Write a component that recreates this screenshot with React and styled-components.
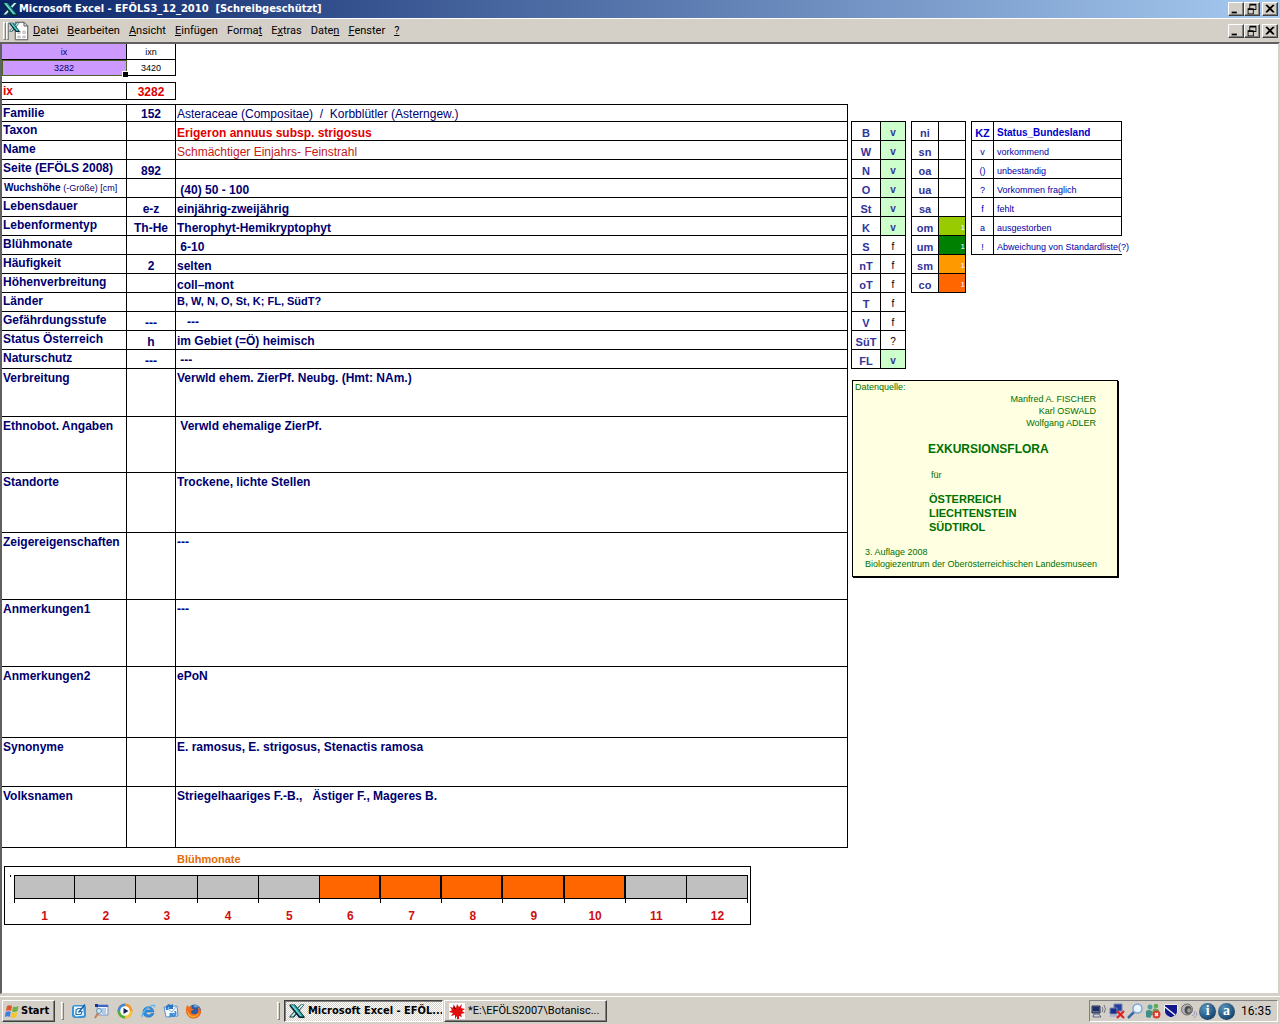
import React from "react";
import styled, { createGlobalStyle, css } from "styled-components";

const GlobalStyle = createGlobalStyle`
  * { box-sizing: border-box; }
  body {
    margin: 0;
    background: #d4d0c8;
    font-family: "Liberation Sans", Arial, sans-serif;
    font-size: 12px;
    line-height: 14px;
  }
`;

const uiFont = `Roboto, "Liberation Sans", sans-serif`;
const boldUiFont = `"DejaVu Sans Condensed", "DejaVu Sans", sans-serif`;
const navy = "#000070";

const raised = css`
  border: 1px solid;
  border-color: #fff #404040 #404040 #fff;
  box-shadow: inset -1px -1px 0 #808080;
`;

const Window = styled.div`
  min-height: 100vh;
  display: flex;
  flex-direction: column;
`;

const TitleBar = styled.header`
  height: 18px;
  display: flex;
  align-items: center;
  gap: 1px;
  padding: 0 2px;
  color: #fff;
  background: linear-gradient(90deg, #0a246a, #a6caf0);
`;

const Title = styled.h1`
  flex: 1;
  margin: 0;
  font: bold 11px/16px ${boldUiFont};
  white-space: pre;
`;

const WindowButtons = styled.div`
  display: flex;
  margin-left: auto;
`;

const WindowButton = styled.button`
  ${raised}
  width: 16px;
  height: 14px;
  padding: 0;
  margin-left: ${p => (p.$apart ? "2px" : "0")};
  background: #d4d0c8;
  display: flex;
  align-items: center;
  justify-content: center;
`;

const MenuBar = styled.nav`
  height: 24px;
  display: flex;
  align-items: center;
  padding: 0 2px 0 3px;
  border-top: 1px solid #fff;
`;

const Grip = styled.span`
  width: 3px;
  height: 18px;
  border: 1px solid;
  border-color: #fff #808080 #808080 #fff;
`;

const Menu = styled.div`
  display: flex;
  gap: 9px;
  margin-left: 4px;
`;

const MenuItem = styled.button`
  border: none;
  background: none;
  padding: 0;
  color: #000;
  font: 11px/16px ${uiFont};
`;

const Sheet = styled.main`
  flex: 1;
  background: #fff;
  border: 2px solid #606060;
  border-right-color: #d4d0c8;
  border-bottom: 1px solid #d4d0c8;
`;

const Grid = styled.table`
  border-spacing: 0;
  table-layout: fixed;
  width: ${p => p.$width || "100%"};
  border-top: ${p => (p.$open ? "none" : "1px solid #000")};
  border-left: ${p => (p.$boxed ? "1px solid #000" : "none")};
  margin-bottom: ${p => p.$after || 0}px;
`;

const Row = styled.tr`
  height: ${p => p.$height || 19}px;
`;

const Cell = styled.td`
  border-right: 1px solid #000;
  border-bottom: 1px solid #000;
  padding: ${p => p.$pad || "1px 1px 0"};
  text-align: ${p => p.$align || "left"};
  vertical-align: ${p => p.$v || "bottom"};
  color: ${p => p.$color || navy};
  background: ${p => p.$bg || "none"};
  font-size: ${p => p.$size || 12}px;
  font-weight: ${p => (p.$plain ? 400 : 700)};
  white-space: pre-wrap;
`;

const SelectedCell = styled(Cell)`
  outline: 1px solid #4f6228;
  outline-offset: -1px;
  position: relative;
  &::after {
    content: "";
    position: absolute;
    right: -2px;
    bottom: -2px;
    width: 5px;
    height: 5px;
    background: #000;
    border: 1px solid #fff;
    border-width: 1px 0 0 1px;
  }
`;

const HeadCell = styled(Cell).attrs({ as: "th", scope: "row" })``;

const Small = styled.span`
  padding-left: 1px;
  font-size: 10px;
  white-space: nowrap;
`;

const Light = styled.span`
  font-size: 9px;
  font-weight: 400;
`;

const Columns = styled.div`
  display: flex;
  align-items: flex-start;
  gap: 3px;
`;

const RecordColumn = styled.div`
  flex: 0 1 846px;
`;

const Side = styled.aside`
  flex: none;
  padding-top: 17px;
`;

const SideTables = styled.div`
  display: flex;
  align-items: flex-start;
  gap: 5px;
`;

const LastCell = styled(Cell)`
  border-right: none;
  white-space: nowrap;
`;

const Source = styled.section`
  width: 266px;
  height: 197px;
  margin: 11px 0 0 1px;
  padding: 0 2px;
  border: 1px solid #000;
  box-shadow: 1px 1px 0 #000;
  background: #ffffe1;
  color: #007000;
  font-size: 9px;
  line-height: 12px;
  p { margin: 0; }
`;

const Authors = styled.p`
  padding-right: 19px;
  text-align: right;
`;

const BookTitle = styled.h2`
  margin: 12px 0 12px 73px;
  font: bold 12px/16px "Liberation Sans", sans-serif;
`;

const Region = styled.div`
  margin: 11px 0 12px 74px;
  font: bold 11px/14px "Liberation Sans", sans-serif;
`;

const For = styled.p`
  padding-left: 76px;
`;

const Edition = styled.p`
  padding-left: 10px;
  white-space: nowrap;
`;

const ChartTitle = styled.h2`
  margin: 0;
  padding: 4px 0 0 175px;
  height: 18px;
  color: #e46c0a;
  font: bold 11px/14px "Liberation Sans", sans-serif;
`;

const Chart = styled.div`
  max-width: 747px;
  height: 59px;
  margin-left: 2px;
  padding: 8px 2px 0 9px;
  border: 1px solid #000;
`;

const Months = styled.div`
  display: grid;
  grid-template-columns: repeat(12, 1fr);
  position: relative;
  /* axis */
  &::before {
    content: "";
    position: absolute;
    left: 0;
    top: 0;
    width: 1px;
    height: 28px;
    background: #000;
  }
  /* stray value mark left of the axis */
  &::after {
    content: "";
    position: absolute;
    left: -4px;
    top: 0;
    width: 1px;
    height: 2px;
    background: #000;
  }
`;

const Bar = styled.div`
  height: 24px;
  background: ${p => (p.$on ? "#ff6600" : "#c0c0c0")};
  border: solid #000;
  border-width: 1px ${p => (p.$on ? 2 : 1)}px 1px 0;
`;

const Tick = styled.div`
  height: 4px;
  border-right: 1px solid #000;
`;

const MonthLabel = styled.div`
  margin-top: 6px;
  text-align: center;
  font-weight: 700;
  color: #d01010;
`;

const TaskBar = styled.footer`
  height: 28px;
  margin-top: 2px;
  padding: 2px 2px 1px;
  border-top: 1px solid #fff;
  display: flex;
  align-items: center;
`;

const StartButton = styled.button`
  ${raised}
  width: 53px;
  height: 22px;
  padding: 0 1px;
  display: flex;
  align-items: center;
  gap: 1px;
  background: #d4d0c8;
  color: #000;
  font: bold 11px/16px ${boldUiFont};
`;

const QuickLaunch = styled.div`
  display: flex;
  align-items: center;
  gap: 7px;
  margin: 0 75px 0 6px;
`;

const IconButton = styled.button`
  border: none;
  background: none;
  padding: 0;
  width: 16px;
  height: 16px;
  display: flex;
`;

const Tasks = styled.div`
  flex: 0 1 323px;
  min-width: 0;
  margin-left: 4px;
  display: flex;
  gap: 1px;
`;

const TaskButton = styled.button`
  ${raised}
  flex: 1 1 0;
  min-width: 0;
  overflow: hidden;
  height: 22px;
  padding: 0 4px;
  display: flex;
  align-items: center;
  gap: 3px;
  color: #000;
  background: #d4d0c8;
  font: 11px/16px ${uiFont};
  white-space: nowrap;
  ${p =>
    p.$active &&
    css`
      font: bold 11px/16px ${boldUiFont};
      padding-right: 0;
      border-color: #404040 #fff #fff #404040;
      box-shadow: inset 1px 1px 0 #808080;
      background: repeating-conic-gradient(#fff 0 25%, #d4d0c8 0 50%) 0 0 / 2px 2px;
    `}
`;

const Tray = styled.div`
  height: 22px;
  margin-left: auto;
  padding: 0 6px 0 1px;
  display: flex;
  align-items: center;
  gap: 2px;
  border: 1px solid;
  border-color: #808080 #fff #fff #808080;
`;

const Clock = styled.time`
  margin-left: 4px;
  font: 12px/16px ${uiFont};
`;

const Icon = ({ children, size = 16 }) => (
  <svg width={size} height={size} viewBox="0 0 16 16" aria-hidden="true" style={{ flexShrink: 0 }}>
    {children}
  </svg>
);

const excelMark = (
  <>
    <path d="M11.500 1.500h4L5 14.500H.5v-1z" fill="#0a3a3e" />
    <path d="M12 2h2.500L4 13.500H1.500z" fill="#c8f4f4" />
    <path d="M.5 1.500H6l9.500 12v1.500H10L.5 3z" fill="#06282c" />
    <path d="M1.500 2h4l9 11.500H11z" fill="#23a3a8" />
    <path d="M2.500 2.500h1.500l8.500 10.500h-1z" fill="#8fe6e6" />
  </>
);

const ExcelIcon = () => <Icon>{excelMark}</Icon>;

const WorkbookIcon = () => (
  <Icon size={20}>
    <path d="M5 1h7l3 3v11H5z" fill="#fff" stroke="#555" strokeWidth=".8" />
    <path d="M12 1v3h3" fill="none" stroke="#555" strokeWidth=".8" />
    <path d="M7 8h2v2H7zM11 8h2v2h-2zM7 12h2v1.500H7zM11 12h2v1.500h-2z" fill="#ddd" stroke="#aaa" strokeWidth=".5" />
    <g transform="translate(0 .5) scale(.55)">{excelMark}</g>
  </Icon>
);

const FlagIcon = () => (
  <Icon>
    <path d="M3 3c2-1.300 3.500-1 5 0L7 8C5.500 7 4 7 2 8z" fill="#e5532d" />
    <path d="M9 3.500c1.500.8 3 .8 5.500-.5l-1 5c-2 1.200-4 1.200-5.500.4z" fill="#6cb33e" />
    <path d="M1.800 9c2-1 3.500-1 5 0l-1 5c-1.500-1-3-1-5 0z" fill="#3f7fe0" />
    <path d="M7.800 9.400c1.500.8 3.500.8 5.500-.4l-1 5c-2 1.200-4 1.200-5.500.4z" fill="#f5c62b" />
  </Icon>
);

const DesktopIcon = () => (
  <Icon>
    <rect x="1" y="2" width="14" height="13" rx="3" fill="#3a94d5" />
    <path d="M3 3.500h9l1 9-8 1-2-2z" fill="#eef8ff" />
    <path d="M11 5.500H7L5 7v4.500h5l1-3H8" fill="none" stroke="#2377b8" strokeWidth="1.200" />
    <path d="M7.500 9.500L14 1.500" stroke="#1c5da0" strokeWidth="1.400" />
  </Icon>
);

const SearchPageIcon = () => (
  <Icon>
    <path d="M3 2h11v10H4z" fill="#eef4fb" stroke="#7b95c9" />
    <path d="M3 2h11v2H3z" fill="#3f66c4" />
    <path d="M6 6h6M7 8h5M8 10h4" stroke="#7ba0d8" />
    <circle cx="5" cy="8" r="2.500" fill="#cbe7fa" stroke="#6b8fb5" />
    <path d="M4 10l-3 5" stroke="#c77a3b" strokeWidth="1.800" />
    <path d="M1 1h3v3H1z" fill="#1630a0" />
  </Icon>
);

const MediaIcon = () => (
  <Icon>
    <circle cx="8" cy="8" r="7.500" fill="#f7941e" />
    <path d="M8 .5A7.500 7.500 0 0 0 .5 8H8z" fill="#3f87d8" />
    <path d="M.5 8A7.500 7.500 0 0 0 8 15.500V8z" fill="#58ad3b" />
    <path d="M8 15.500A7.500 7.500 0 0 0 15.500 8H8z" fill="#f5c431" />
    <circle cx="8" cy="8" r="4.800" fill="#fff" />
    <path d="M6.500 5l5 3-5 3z" fill="#17245b" />
  </Icon>
);

const ExplorerIcon = () => (
  <Icon>
    <path d="M14 9H6c.3 3.200 4 3.800 5.200 1.500H14C12.500 15.500 3 15.800 3 9c0-6.500 10-7.500 11 0zM6 7h5C10.500 4.300 6.500 4.300 6 7z" fill="#2f8de0" stroke="#1b66b5" strokeWidth=".5" />
    <path d="M2 14.500C-1 12 7 2 14 1.500c2 .5 1 3 .5 3.500 0-5-9 .5-11.500 7-.4 1.300-.5 2-1 2.500z" fill="#57b2ed" />
  </Icon>
);

const OutlookIcon = () => (
  <Icon>
    <path d="M1 4l13-1 1 10-12 1z" fill="#f3faff" stroke="#5b8fc9" />
    <path d="M2 4l7 5 5-6" fill="none" stroke="#8db4df" />
    <path d="M3 7C2 2 6 0 8 2l2-1v5H5l1.500-1.500C5 4 4 5 5 7z" fill="#2576c9" />
    <path d="M13 8c2 5-2 7-5 5.500L6.500 15v-5H12l-2 1.700c1.500.3 2.300-1.200 1.300-3.700z" fill="#3d8ddb" />
  </Icon>
);

const FirefoxIcon = () => (
  <Icon>
    <circle cx="8.500" cy="8" r="6.500" fill="#2c5aa8" />
    <path d="M7 3c2-2 5-1 6 1-2-.5-3 0-3 1z" fill="#69a9e3" />
    <path d="M1 2l2 2 3-1c-1 2 0 3 2 3-1 2-3 1-3 3 1 3 6 3 7 0 1-2 0-4-1-5 4 1 5 5 3 8-2 4-9 5-12 1C-1 10 0 5 1 2z" fill="#ee6c1b" />
    <path d="M2 7c0 6 7 8 11 3-1 5-9 6-11 1-.5-1.500-.5-3 0-4z" fill="#f9b233" />
  </Icon>
);

const SplatIcon = () => (
  <Icon>
    <path fill="#fff" d="M0 0h16v16H0z" />
    <path d="M4 1l3 4 1-4 2 3 3-3-1 4 4 1-3 2 3 2-4 1 1 3-3-1v3H8v-3l-2 3v-4l-4 1 2-3-4-1 3-2-2-3 4 1z" fill="#e01010" />
    <path d="M4 4l3 2M5 3l1 3" stroke="#8c0000" />
  </Icon>
);

const SignalIcon = () => (
  <Icon>
    <path d="M1 3h8v7H1z" fill="#5d6f93" stroke="#26304d" />
    <path d="M2 4h6v4H2z" fill="#1c2c6b" />
    <path d="M3 11h5l2 3H2z" fill="#c9cfdd" stroke="#39435e" strokeWidth=".7" />
    <path d="M11 4q2 2 0 5M13 2q3 4 0 8" fill="none" stroke="#6f7787" />
  </Icon>
);

const OfflineIcon = () => (
  <Icon>
    <path d="M5 1h8v7H5z" fill="#24409c" stroke="#7487ba" />
    <path d="M1 5h7v6H1z" fill="#1b2f87" stroke="#7487ba" />
    <path d="M1 12h7l1 2H0z" fill="#aeb8cf" />
    <path d="M8 8l7 7M15 8l-7 7" stroke="#e22020" strokeWidth="2.200" />
  </Icon>
);

const MagnifierIcon = () => (
  <Icon>
    <path d="M7 9l-6 6" stroke="#3868a8" strokeWidth="2.500" />
    <circle cx="10.500" cy="5.500" r="4.500" fill="#e8f5ff" stroke="#7da7d4" strokeWidth="1.500" />
  </Icon>
);

const MessengerIcon = () => (
  <Icon>
    <circle cx="5" cy="4" r="2.500" fill="#4c9d9b" />
    <path d="M1 8c3-2 6-1 7 2l-3 5-4-1z" fill="#3f8f88" />
    <circle cx="11" cy="3" r="2.300" fill="#5cad5a" />
    <path d="M8 6c3-1 6 0 6 2l-2 4-5-1z" fill="#62a95a" />
    <circle cx="11.500" cy="11.500" r="4" fill="#d93a2e" />
    <path d="M10 10l3 3M13 10l-3 3" stroke="#fff" strokeWidth="1.300" />
  </Icon>
);

const ShieldIcon = () => (
  <Icon>
    <path d="M1.500 1.500h13V8c0 4-3.500 5.500-6.500 7-3-1.500-6.500-3-6.500-7z" fill="#10188c" stroke="#eee" />
    <path d="M2 4l10 8" stroke="#fff" strokeWidth="1.300" />
  </Icon>
);

const SpeakerIcon = () => (
  <Icon>
    <ellipse cx="6" cy="6.500" rx="5.500" ry="5.500" fill="#b5b5b5" stroke="#6a6a6a" />
    <ellipse cx="7" cy="7" rx="3.500" ry="4" fill="#4e4e4e" />
    <ellipse cx="8" cy="7.500" rx="1.800" ry="2.200" fill="#9d9d9d" />
    <path d="M11 13q3-1 3-5M13 15q3-2 3-6" fill="none" stroke="#9a9ac4" />
  </Icon>
);

const Orb = styled.span`
  width: 17px;
  height: 17px;
  border-radius: 50%;
  background: radial-gradient(circle at 35% 30%, #5d93b8, #12426d 75%);
  color: #fff;
  font: bold 14px/16px "Liberation Serif", serif;
  text-align: center;
`;

const windowGlyphs = [
  ["Minimieren", <path key="m" d="M3 11h6v2H3z" />],
  [
    "Wiederherstellen",
    <path key="r" fillRule="evenodd" d="M5 2h8v7h-3v5H3V7h2zM6 4v3h4v1h2V4zM4 9v4h5V9z" />
  ],
  [
    "Schließen",
    <path key="c" d="M3 3h2l3 3 3-3h2v1L9.500 7.500 13 11v1h-2L8 9l-3 3H3v-1l3.500-3.500L3 4z" />
  ]
];

const Controls = () => (
  <WindowButtons>
    {windowGlyphs.map(([name, glyph], i) => (
      <WindowButton key={name} aria-label={name} $apart={i === 2}>
        <Icon size={14}>{glyph}</Icon>
      </WindowButton>
    ))}
  </WindowButtons>
);

// [before, access key, after]
const menus = [
  ["", "D", "atei"],
  ["", "B", "earbeiten"],
  ["", "A", "nsicht"],
  ["", "E", "infügen"],
  ["Forma", "t", ""],
  ["E", "x", "tras"],
  ["Date", "n", ""],
  ["", "F", "enster"],
  ["", "?", ""]
];

const red = "#e00000";

const record = [
  { label: "Familie", code: "152", value: "Asteraceae (Compositae)  /  Korbblütler (Asterngew.)", plain: true, height: 17 },
  { label: "Taxon", value: "Erigeron annuus subsp. strigosus", color: red },
  { label: "Name", value: "Schmächtiger Einjahrs- Feinstrahl", color: "#c02020", plain: true },
  { label: "Seite (EFÖLS 2008)", code: "892" },
  {
    label: (
      <Small>
        Wuchshöhe <Light>(-Größe) [cm]</Light>
      </Small>
    ),
    value: " (40) 50 - 100"
  },
  { label: "Lebensdauer", code: "e-z", value: "einjährig-zweijährig" },
  { label: "Lebenformentyp", code: "Th-He", value: "Therophyt-Hemikryptophyt" },
  { label: "Blühmonate", value: " 6-10" },
  { label: "Häufigkeit", code: "2", value: "selten" },
  { label: "Höhenverbreitung", value: "coll–mont" },
  { label: "Länder", value: "B, W, N, O, St, K; FL, SüdT?", size: 11, v: "top" },
  { label: "Gefährdungsstufe", code: "---", value: "   ---", v: "middle" },
  { label: "Status Österreich", code: "h", value: "im Gebiet (=Ö) heimisch", v: "middle" },
  { label: "Naturschutz", code: "---", value: " ---", v: "middle" },
  { label: "Verbreitung", value: "Verwld ehem. ZierPf. Neubg. (Hmt: NAm.)", height: 48 },
  { label: "Ethnobot. Angaben", value: " Verwld ehemalige ZierPf.", height: 56 },
  { label: "Standorte", value: "Trockene, lichte Stellen", height: 60 },
  { label: "Zeigereigenschaften", value: "---", height: 67 },
  { label: "Anmerkungen1", value: "---", height: 67 },
  { label: "Anmerkungen2", value: "ePoN", height: 71 },
  { label: "Synonyme", value: "E. ramosus, E. strigosus, Stenactis ramosa", height: 49 },
  { label: "Volksnamen", value: "Striegelhaariges F.-B.,   Ästiger F., Mageres B.", height: 61 }
];

const states = [
  ["B", "v"], ["W", "v"], ["N", "v"], ["O", "v"], ["St", "v"], ["K", "v"],
  ["S", "f"], ["nT", "f"], ["oT", "f"], ["T", "f"], ["V", "f"], ["SüT", "?"], ["FL", "v"]
];

const zones = [
  ["ni"], ["sn"], ["oa"], ["ua"], ["sa"],
  ["om", "#99cc00"], ["um", "#008000"], ["sm", "#ff9900"], ["co", "#ff6600"]
];

const legend = [
  ["v", "vorkommend"],
  ["()", "unbeständig"],
  ["?", "Vorkommen fraglich"],
  ["f", "fehlt"],
  ["a", "ausgestorben"],
  ["!", "Abweichung von Standardliste(?)"]
];

const quickLaunch = [
  ["Desktop anzeigen", DesktopIcon],
  ["Suchen", SearchPageIcon],
  ["Media Player", MediaIcon],
  ["Internet Explorer", ExplorerIcon],
  ["Outlook Express", OutlookIcon],
  ["Firefox", FirefoxIcon]
];

const Cols = ({ widths }) => (
  <colgroup>
    {widths.map((w, i) => (
      <col key={i} width={w} />
    ))}
  </colgroup>
);

const IndexTables = () => (
  <>
    <Grid $width="174px" $open $after={6}>
      <Cols widths={[125, 49]} />
      <tbody>
        <Row $height={16}>
          <Cell $align="center" $bg="#cc99ff" $size={9} $plain>ix</Cell>
          <Cell $align="center" $color="#000" $size={9} $plain>ixn</Cell>
        </Row>
        <Row $height={16}>
          <SelectedCell $align="center" $bg="#cc99ff" $size={9} $plain>3282</SelectedCell>
          <Cell $align="center" $color="#000" $size={9} $plain>3420</Cell>
        </Row>
      </tbody>
    </Grid>
    <Grid $width="174px" $after={4}>
      <Cols widths={[125, 49]} />
      <tbody>
        <Row $height={17}>
          <HeadCell $color={red} $v="top">ix</HeadCell>
          <Cell $align="center" $color={red}>3282</Cell>
        </Row>
      </tbody>
    </Grid>
  </>
);

const Record = () => (
  <Grid>
    <Cols widths={[125, 49, undefined]} />
    <tbody>
      {record.map((r, i) => {
        const tall = r.height > 19;
        return (
          <Row key={i} $height={r.height}>
            <HeadCell $v="top" $pad={tall ? "2px 1px 0" : undefined}>{r.label}</HeadCell>
            <Cell $align="center">{r.code}</Cell>
            <Cell
              $v={tall ? "top" : r.v}
              $pad={tall ? "2px 1px 0" : undefined}
              $color={r.color}
              $plain={r.plain}
              $size={r.size}
            >
              {r.value}
            </Cell>
          </Row>
        );
      })}
    </tbody>
  </Grid>
);

const States = () => (
  <Grid $width="55px" $boxed>
    <Cols widths={[29, 25]} />
    <tbody>
      {states.map(([name, status]) => (
        <Row key={name}>
          <HeadCell $align="center" $size={11} $color="#333399">{name}</HeadCell>
          <Cell
            $align="center"
            $size={10}
            $bg={status === "v" ? "#ccffcc" : undefined}
            $color={status === "v" ? "#333399" : "#000"}
            $plain={status !== "v"}
          >
            {status}
          </Cell>
        </Row>
      ))}
    </tbody>
  </Grid>
);

const Zones = () => (
  <Grid $width="55px" $boxed>
    <Cols widths={[27, 27]} />
    <tbody>
      {zones.map(([name, color]) => (
        <Row key={name}>
          <HeadCell $align="center" $size={11} $color="#333399">{name}</HeadCell>
          <Cell $align="right" $size={8} $color="#fff" $bg={color} $pad="0" $plain>{color && "1"}</Cell>
        </Row>
      ))}
    </tbody>
  </Grid>
);

const Legend = () => (
  <Grid $width="151px" $boxed>
    <Cols widths={[22, 128]} />
    <thead>
      <Row>
        <Cell as="th" $align="center" $size={11} $color="#0000cc">KZ</Cell>
        <Cell as="th" $size={10} $color="#0000cc" $pad="1px 3px 0">Status_Bundesland</Cell>
      </Row>
    </thead>
    <tbody>
      {legend.map(([key, text]) => {
        const Text = key === "!" ? LastCell : Cell;
        return (
          <Row key={key}>
            <Cell $align="center" $size={9} $color="#0000a8" $plain>{key}</Cell>
            <Text $size={9} $color="#0000a8" $pad="1px 3px 0" $plain>{text}</Text>
          </Row>
        );
      })}
    </tbody>
  </Grid>
);

const SourceNote = () => (
  <Source>
    <p>Datenquelle:</p>
    <Authors>
      Manfred A. FISCHER<br />
      Karl OSWALD<br />
      Wolfgang ADLER
    </Authors>
    <BookTitle>EXKURSIONSFLORA</BookTitle>
    <For>für</For>
    <Region>
      ÖSTERREICH<br />
      LIECHTENSTEIN<br />
      SÜDTIROL
    </Region>
    <Edition>
      3. Auflage 2008<br />
      Biologiezentrum der Oberösterreichischen Landesmuseen
    </Edition>
  </Source>
);

const Flowering = () => (
  <section>
    <ChartTitle>Blühmonate</ChartTitle>
    <Chart>
      <Months>
        {Array.from({ length: 12 }, (_, i) => i + 1).map(m => (
          <div key={m}>
            <Bar $on={m >= 6 && m <= 10} />
            <Tick />
            <MonthLabel>{m}</MonthLabel>
          </div>
        ))}
      </Months>
    </Chart>
  </section>
);

export default function App() {
  return (
    <Window>
      <GlobalStyle />
      <TitleBar>
        <ExcelIcon />
        <Title>{"Microsoft Excel - EFÖLS3_12_2010  [Schreibgeschützt]"}</Title>
        <Controls />
      </TitleBar>
      <MenuBar>
        <Grip />
        <Grip />
        <WorkbookIcon />
        <Menu>
          {menus.map(([before, key, after]) => (
            <MenuItem key={before + key + after}>
              {before}
              <u>{key}</u>
              {after}
            </MenuItem>
          ))}
        </Menu>
        <Controls />
      </MenuBar>
      <Sheet>
        <IndexTables />
        <Columns>
          <RecordColumn>
            <Record />
            <Flowering />
          </RecordColumn>
          <Side>
            <SideTables>
              <States />
              <Zones />
              <Legend />
            </SideTables>
            <SourceNote />
          </Side>
        </Columns>
      </Sheet>
      <TaskBar>
        <StartButton>
          <FlagIcon />
          Start
        </StartButton>
        <QuickLaunch>
          <Grip />
          {quickLaunch.map(([name, Glyph]) => (
            <IconButton key={name} aria-label={name}>
              <Glyph />
            </IconButton>
          ))}
        </QuickLaunch>
        <Grip />
        <Tasks>
          <TaskButton $active>
            <ExcelIcon />
            Microsoft Excel - EFÖL...
          </TaskButton>
          <TaskButton>
            <SplatIcon />
            *E:\EFÖLS2007\Botanisc...
          </TaskButton>
        </Tasks>
        <Tray>
          <SignalIcon />
          <OfflineIcon />
          <MagnifierIcon />
          <MessengerIcon />
          <ShieldIcon />
          <SpeakerIcon />
          <Orb>i</Orb>
          <Orb>a</Orb>
          <Clock>16:35</Clock>
        </Tray>
      </TaskBar>
    </Window>
  );
}
